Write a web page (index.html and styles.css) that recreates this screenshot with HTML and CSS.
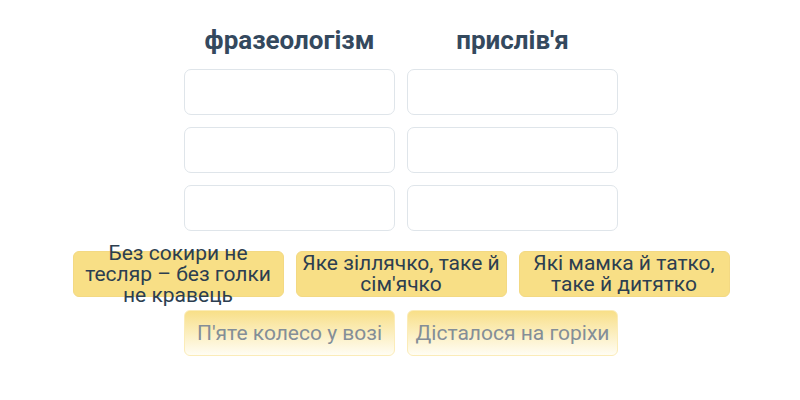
FILE: index.html
```html
<!DOCTYPE html>
<html lang="uk">
<head>
    <meta charset="UTF-8">
    <title>Фразеологізм чи прислів'я</title>
    <link rel="stylesheet" href="styles.css">
</head>
<body>

<div class="game">
    <div class="board">
        <div class="column">
            <h2>фразеологізм</h2>
            <div class="slot"></div>
            <div class="slot"></div>
            <div class="slot"></div>
        </div>
        <div class="column">
            <h2>прислів'я</h2>
            <div class="slot"></div>
            <div class="slot"></div>
            <div class="slot"></div>
        </div>
    </div>

    <div class="pool">
        <div class="card">Без сокири не тесляр – без голки не кравець</div>
        <div class="card">Яке зіллячко, таке й сім'ячко</div>
        <div class="card">Які мамка й татко, таке й дитятко</div>
        <div class="card faded">П'яте колесо у возі</div>
        <div class="card faded">Дісталося на горіхи</div>
    </div>
</div>

</body>
</html>
```

FILE: styles.css
```css
* {
    padding: 0;
    margin: 0;
    box-sizing: border-box;
}
body {
    font-family: Roboto, "Liberation Sans", sans-serif;
    color: #2c3e50;
    background: #fff;
}
.game {
    display: flex;
    flex-direction: column;
    align-items: center;
    padding-top: 24px;
    padding-left: 2px;
}
.board {
    display: flex;
    gap: 12px;
}
.column {
    width: 211px;
    display: flex;
    flex-direction: column;
    gap: 12px;
}
.column h2 {
    font-size: 26px;
    font-weight: 700;
    text-align: center;
    line-height: 32px;
    margin-bottom: 1px;
    color: #34495e;
}
.slot {
    height: 46px;
    border: 1.5px solid #dfe5ea;
    border-radius: 7px;
}
.pool {
    display: flex;
    flex-wrap: wrap;
    justify-content: center;
    gap: 13px 12px;
    width: 660px;
    margin-top: 20px;
}
.card {
    width: 211px;
    height: 46px;
    display: flex;
    align-items: center;
    justify-content: center;
    text-align: center;
    padding: 0 3px;
    font-size: 21px;
    line-height: 21px;
    background: #f8df86;
    border: 1px solid #f3d983;
    border-radius: 6px;
    color: #2c3e50;
}
.card.faded {
    background: linear-gradient(to bottom, #f8df88, #fffdf4);
    border-color: #fbecb8;
    color: #848e97;
}
```
